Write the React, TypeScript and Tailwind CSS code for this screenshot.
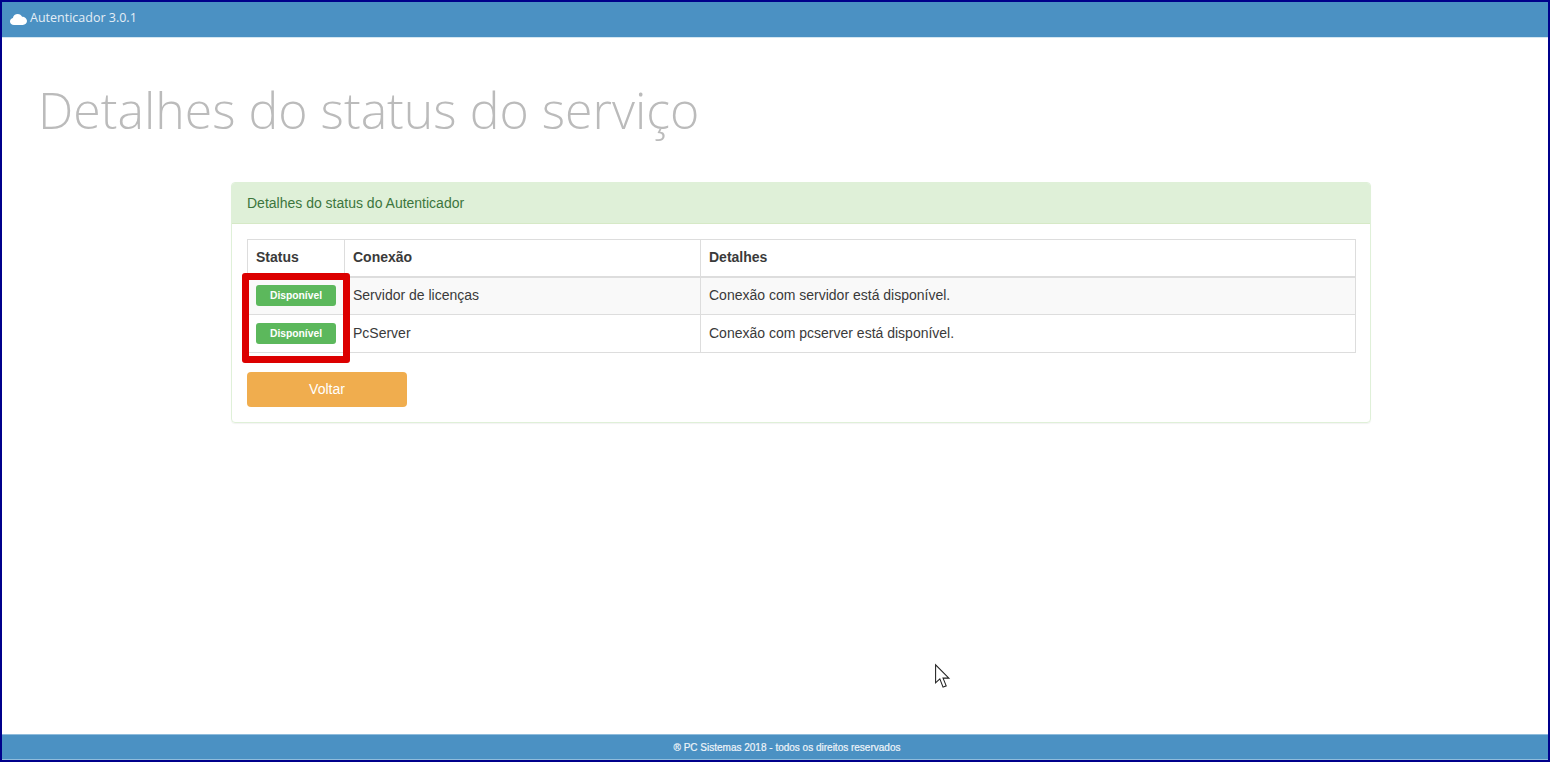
import React from "react";

const Badge = () => (
  <span className="flex h-[21px] w-[80px] items-center justify-center rounded-[3px] bg-[#5cb85c] text-[10.3px] font-bold text-white [font-family:'Liberation_Sans',Arial,sans-serif]">
    Disponível
  </span>
);

const cell = "border border-[#ddd] px-2 align-middle";

export default function App() {
  return (
    <div className="flex h-[762px] w-[1550px] flex-col overflow-hidden border-2 border-[#00008b] bg-white text-[14px] text-[#3a3a3a] [font-family:'Liberation_Sans',Arial,sans-serif]">
      <header className="flex h-[36px] items-center gap-[3px] border-b border-[#d4e6f1] bg-[#4b91c3] pb-[2px] pl-[8px] text-[12.5px] text-[#e4eef6] [font-family:'Open_Sans',sans-serif]">
        <svg width="17" height="12" viewBox="0 0 17 12" fill="#ffffff" aria-hidden="true">
          <path d="M4 12C1.8 12 0 10.4 0 8.4 0 6.7 1.2 5.3 2.9 4.9 3.3 2.7 5.3 1 7.7 1c2 0 3.7 1.1 4.4 2.8C14.8 3.8 17 5.8 17 8.1 17 10.300 15.100 12 12.800 12Z" />
        </svg>
        <span>Autenticador 3.0.1</span>
      </header>

      <main className="flex-1">
        <h1 className="ml-[36px] mt-[37px] text-[50px] font-light leading-[70px] text-[#bbbbbb] [font-family:'Open_Sans',sans-serif]">
          Detalhes do status do serviço
        </h1>

        <section className="relative ml-[229px] mt-[37px] h-[241px] w-[1140px] rounded-[4px] border border-[#dff0d8] shadow-[0_1px_1px_rgba(0,0,0,0.05)]">
          <div className="flex h-[41px] items-center rounded-t-[3px] border-b border-[#d6e9c6] bg-[#dff0d8] px-[15px] text-[#3c763d]">
            Detalhes do status do Autenticador
          </div>
          <div className="px-[15px] pt-[15px]">
            <table className="w-[1109px] table-fixed border-collapse text-left">
              <colgroup>
                <col className="w-[97px]" />
                <col className="w-[356px]" />
                <col />
              </colgroup>
              <thead>
                <tr className="h-[37px]">
                  <th className={`${cell} border-b-2 font-bold`}>Status</th>
                  <th className={`${cell} border-b-2 font-bold`}>Conexão</th>
                  <th className={`${cell} border-b-2 font-bold`}>Detalhes</th>
                </tr>
              </thead>
              <tbody>
                <tr className="h-[38px] bg-[#f9f9f9]">
                  <td className={cell}><Badge /></td>
                  <td className={cell}>Servidor de licenças</td>
                  <td className={cell}>Conexão com servidor está disponível.</td>
                </tr>
                <tr className="h-[38px]">
                  <td className={cell}><Badge /></td>
                  <td className={cell}>PcServer</td>
                  <td className={cell}>Conexão com pcserver está disponível.</td>
                </tr>
              </tbody>
            </table>
            <button className="mt-[19px] h-[35px] w-[160px] rounded-[4px] bg-[#f0ad4e] text-white">
              Voltar
            </button>
          </div>
          <div className="pointer-events-none absolute left-[10px] top-[90px] h-[90px] w-[108px] rounded-[3px] border-[7px] border-[#dc0000]" />
        </section>
      </main>

      <footer className="flex h-[26px] items-center justify-center border-y border-[#8fbcdc] bg-[#4b91c3] pl-[24px] pt-[1px] text-[10px] text-[#eef4f9] [-webkit-text-stroke:0.2px_#eef4f9]">
        ® PC Sistemas 2018 - todos os direitos reservados
      </footer>

      <svg className="absolute left-[934px] top-[663px]" width="17" height="27" viewBox="0 0 16 25" aria-hidden="true">
        <path d="M1.500 1.500V18.500L5.500 14.700L8.500 22.500L11.500 21.300L8.500 14H14Z" fill="#ffffff" stroke="#222222" strokeWidth="1" strokeLinejoin="miter" />
      </svg>
    </div>
  );
}
